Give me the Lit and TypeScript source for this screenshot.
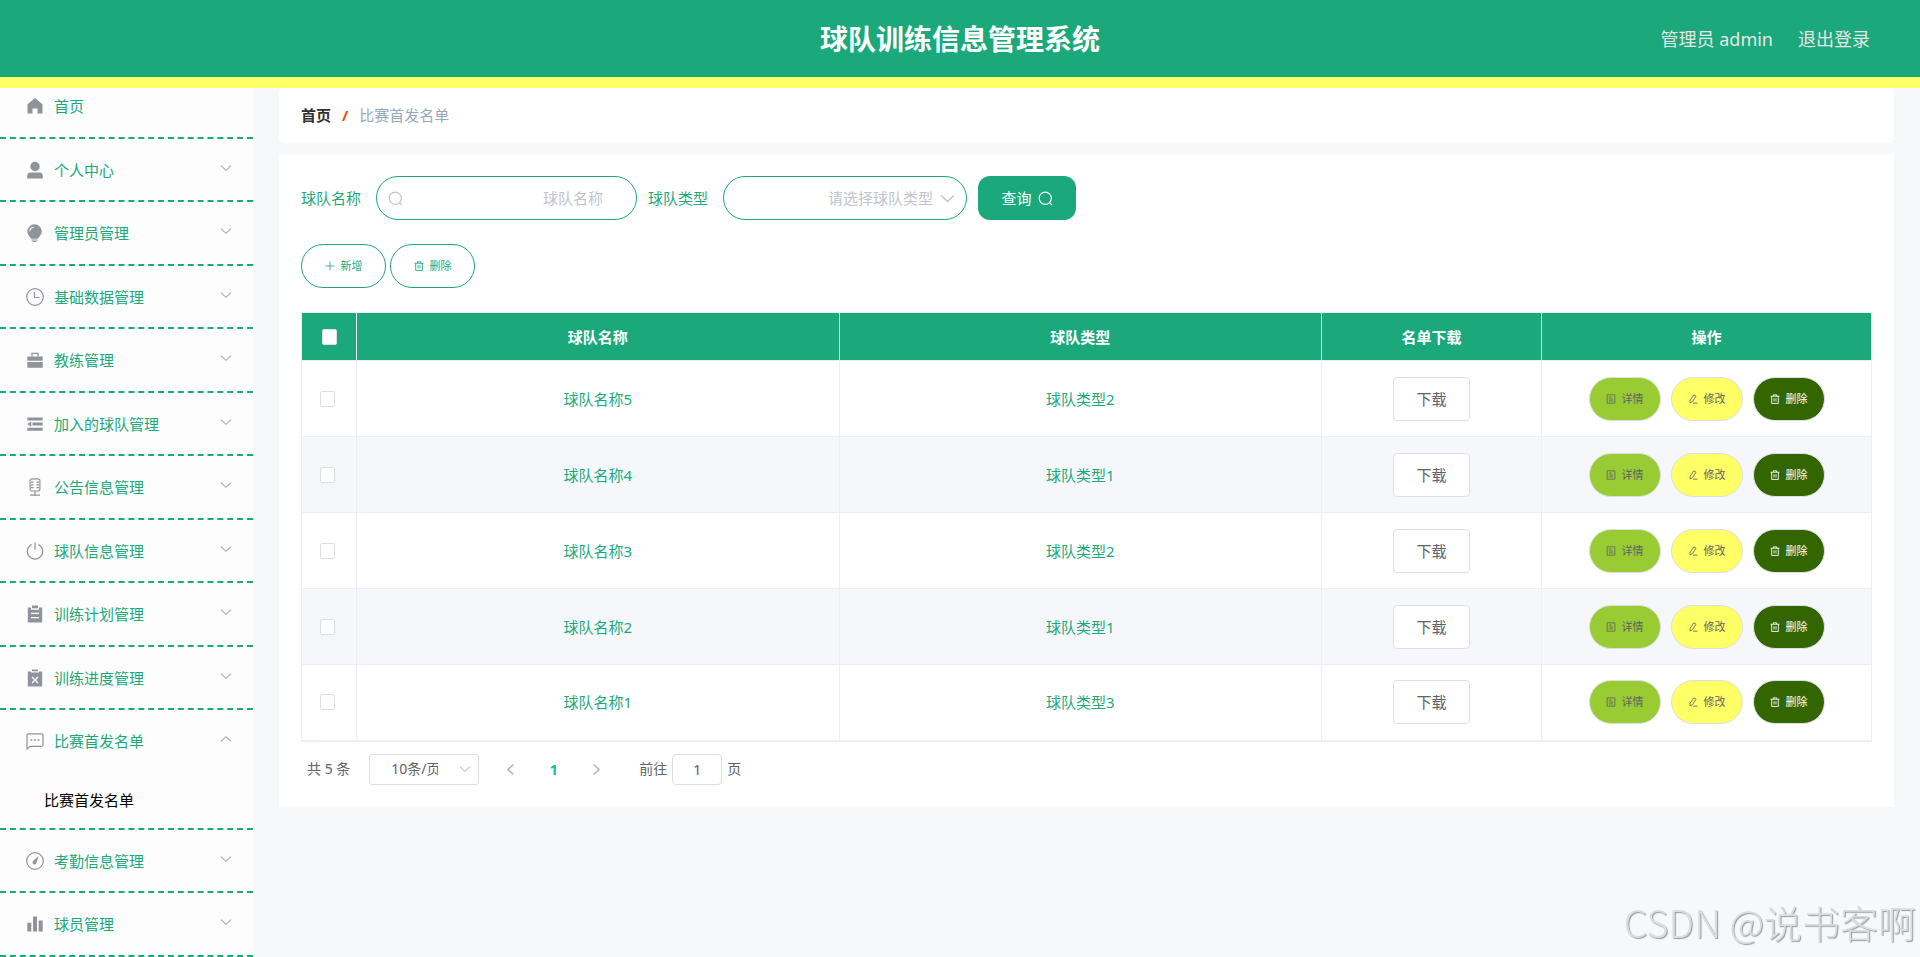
import { LitElement, html, css, svg, nothing } from "lit";
import { customElement, state } from "lit/decorators.js";

const icons: Record<string, unknown> = {
  home: svg`<path d="M9 1 1.500 7.300V16.500H6.500v-5h5v5h5V7.300Z" fill="currentColor"/>`,
  user: svg`<circle cx="9" cy="5.500" r="4.700" fill="currentColor"/><path d="M1.200 17.500v-2.300q0-3.400 3.400-3.700h8.800q3.400.3 3.400 3.700v2.300Z" fill="currentColor"/>`,
  bulb: svg`<path d="M8.500.3a7.200 7.200 0 0 0-7.200 7.200c0 3 1.900 4.600 4 7.300h6.400c2.100-2.700 4-4.300 4-7.300A7.200 7.200 0 0 0 8.500.3Z" fill="currentColor"/><path d="M3.700 7.200a4.600 4.600 0 0 1 4-4" fill="none" stroke="#fff" stroke-width="1.100"/><path d="M5.500 16h6M6.500 17.500h4" stroke="currentColor" stroke-width="1"/>`,
  clock: svg`<g fill="none" stroke="currentColor" stroke-width="1.200"><circle cx="9" cy="9" r="8.300"/><path d="M8.500 4v5.500h5"/></g>`,
  briefcase: svg`<path d="M1.300 5.500h15.400v4.200H1.300ZM1.300 11h15.400v5.800H1.300Z" fill="currentColor"/><path d="M6 5.500V2.300h6v3.200" fill="none" stroke="currentColor" stroke-width="1.300"/>`,
  fold: svg`<path d="M1.300 2.500h15.400v3H1.300ZM6.500 7.600h10.200v3H6.500ZM1.300 12.700h15.400v3H1.300ZM1.300 9.100l4-2.700v5.400Z" fill="currentColor"/>`,
  mic: svg`<g fill="none" stroke="currentColor" stroke-width="1.200"><rect x="4.100" y=".8" width="9.800" height="12.200" rx="2"/><path d="M5 4.200h2.500M10.500 4.200H13M5 6.900h2.500M10.500 6.900H13M5 9.600h2.500M10.500 9.600H13M9 13v4M4 17.200h10"/></g>`,
  power: svg`<g fill="none" stroke="currentColor" stroke-width="1.200"><path d="M5.700 2.500a7.700 7.700 0 1 0 6.600 0M9 .5v7.200"/></g>`,
  order: svg`<path d="M1.800 2.400H5v2.400h8V2.400h3.200v15.200H1.800ZM6 .6h6v2.600H6Z" fill="currentColor"/><path d="M5 8.300h8M5 12.700h8" stroke="#fff" stroke-width="1.200"/>`,
  release: svg`<path d="M1.800 2.400H5v1h8v-1h3.200v15.200H1.800ZM6 .6h6v1.600H6Z" fill="currentColor"/><path d="m6 8 6 6M12 8l-6 6" stroke="#fff" stroke-width="1.300"/>`,
  chat: svg`<path d="M1 17V3.600Q1 1.800 2.800 1.800h12.400q1.800 0 1.800 1.800v9q0 1.800-1.800 1.800H4.300Z" fill="none" stroke="currentColor" stroke-width="1.200"/><path d="M4.500 7.200h1.800v1.600H4.500ZM8.100 7.200h1.800v1.600H8.100ZM11.700 7.200h1.800v1.600h-1.800Z" fill="currentColor"/>`,
  odometer: svg`<circle cx="9" cy="9" r="8.300" fill="none" stroke="currentColor" stroke-width="1.200"/><path d="M12.600 4 6.800 9.300a2 2 0 1 0 3.600 1.700Z" fill="currentColor"/>`,
  bars: svg`<path d="M1.300 7.700h4v8.800h-4ZM7 1.500h4v15H7ZM12.700 5.500h4v11h-4Z" fill="currentColor"/>`,
  search: svg`<g fill="none" stroke="currentColor" stroke-width="1.400"><circle cx="8.700" cy="8.700" r="7.300"/><path d="m13.800 14 3.200 3"/></g>`,
  down: svg`<path d="m1.500 5.500 7.500 7 7.500-7" fill="none" stroke="currentColor" stroke-width="1.700"/>`,
  up: svg`<path d="m1.500 12.500 7.500-7 7.500 7" fill="none" stroke="currentColor" stroke-width="1.700"/>`,
  prev: svg`<path d="M12.500 3 6 9l6.500 6" fill="none" stroke="currentColor" stroke-width="2"/>`,
  next: svg`<path d="m5.500 3 6.500 6-6.500 6" fill="none" stroke="currentColor" stroke-width="2"/>`,
  plus: svg`<path d="M9 1v16M1 9h16" stroke="currentColor" stroke-width="1.500"/>`,
  trash: svg`<g fill="none" stroke="currentColor" stroke-width="1.600"><path d="M1 4h16M6 4V1.500h6V4M3 4v13h12V4M7.200 7.500v6M10.800 7.500v6"/></g>`,
  doc: svg`<g fill="none" stroke="currentColor" stroke-width="1.500"><path d="M2 1.500h14v15H2ZM5 5.500h5M5 9h8M5 12.500h8"/></g>`,
  edit: svg`<g fill="none" stroke="currentColor" stroke-width="1.500"><path d="M10.500 1.500 14.500 4 8 14l-4.500 2 .3-4.800ZM9 16.500h8"/></g>`,
};

const icon = (name: string, size: string) =>
  html`<svg class="icon ${size}" viewBox="0 0 18 18" aria-hidden="true">${icons[name]}</svg>`;

const menu = [
  { label: "首页", icon: "home", leaf: true },
  { label: "个人中心", icon: "user" },
  { label: "管理员管理", icon: "bulb" },
  { label: "基础数据管理", icon: "clock" },
  { label: "教练管理", icon: "briefcase" },
  { label: "加入的球队管理", icon: "fold" },
  { label: "公告信息管理", icon: "mic" },
  { label: "球队信息管理", icon: "power" },
  { label: "训练计划管理", icon: "order" },
  { label: "训练进度管理", icon: "release" },
  { label: "比赛首发名单", icon: "chat", children: ["比赛首发名单"] },
  { label: "考勤信息管理", icon: "odometer" },
  { label: "球员管理", icon: "bars" },
] as { label: string; icon: string; leaf?: boolean; children?: string[] }[];

const rows = [
  { name: "球队名称5", type: "球队类型2" },
  { name: "球队名称4", type: "球队类型1" },
  { name: "球队名称3", type: "球队类型2" },
  { name: "球队名称2", type: "球队类型1" },
  { name: "球队名称1", type: "球队类型3" },
];

@customElement("app-root")
export class AppRoot extends LitElement {
  @state() private open = "比赛首发名单";

  static styles = css`
    :host {
      --green: #1ba97b;
      --line: #ebeef5;
      --border: #dcdfe6;
      display: block;
      min-height: 100vh;
      background: #f7f8fa;
      color: #606266;
      font: 15px/20px "Noto Sans", "Noto Sans CJK SC", sans-serif;
    }
    * { box-sizing: border-box; }
    button, input, select { font: inherit; color: inherit; margin: 0; }
    button { cursor: pointer; }
    a { color: inherit; text-decoration: none; }
    .icon { display: block; flex: none; }
    .s10 { width: 10px; height: 10px; }
    .s12 { width: 12px; height: 12px; }
    .s15 { width: 15px; height: 15px; }
    .s18 { width: 18px; height: 18px; }

    .top {
      position: relative;
      z-index: 1;
      display: grid;
      grid-template-columns: 1fr auto 1fr;
      align-items: center;
      height: 88px;
      padding: 0 50px;
      background: var(--green);
      border-bottom: 11px solid #ffff66;
    }
    .title { grid-column: 2; margin: 0; color: #fff; font-size: 28px; line-height: 40px; font-weight: 700; }
    .account {
      display: flex;
      justify-content: flex-end;
      gap: 25px;
      color: #e6e6e6;
      font-size: 18px;
      line-height: 28px;
    }

    .body { display: flex; align-items: flex-start; }
    .side { flex: none; width: 253px; margin-top: -13px; background: #fdfdfd; }
    .menu { list-style: none; margin: 0; padding: 0; color: var(--green); }
    .entry { border-bottom: 2px dashed var(--green); }
    .head {
      display: flex;
      align-items: center;
      gap: 10px;
      width: 100%;
      height: 62px;
      padding: 0 20px 0 26px;
      border: 0;
      background: none;
      text-align: left;
    }
    .entry:nth-child(even) .head { height: 61px; }
    .head .s18 { color: #909399; }
    .head .s12 { color: #a8abb2; margin: 0 1px 4px auto; }
    .sub { display: flex; align-items: center; height: 56px; padding-left: 44px; color: #000; }

    .main { flex: 1; min-width: 0; padding: 0 26px 26px; }
    .crumbs {
      display: flex;
      align-items: center;
      gap: 11px;
      height: 55px;
      padding: 0 22px 2px;
      background: #fff;
      border-radius: 5px;
      color: #97a8be;
    }
    .crumbs a { color: #303133; font-weight: 700; }
    .slash { color: #ff4411; font-weight: 700; }
    .card { margin-top: 11px; padding: 22px; background: #fff; }

    .filters { display: flex; align-items: center; gap: 11px; }
    .filters label { min-width: 62px; color: var(--green); }
    .field { position: relative; display: flex; align-items: center; color: #c0c4cc; }
    .field input, .field select {
      height: 44px;
      padding: 0 33px;
      border: 1px solid var(--green);
      border-radius: 22px;
      background: #fff;
      outline: none;
      text-align: right;
      text-align-last: right;
      appearance: none;
    }
    .field input { width: 261px; margin-left: 2px; }
    .field select { width: 244px; margin-left: 2px; }
    .field input::placeholder { color: #c0c4cc; }
    .field .icon { position: absolute; pointer-events: none; }
    .field .lead { left: 14px; }
    .field .trail { right: 12px; }
    .query {
      display: flex;
      align-items: center;
      justify-content: center;
      gap: 6px;
      width: 98px;
      height: 44px;
      border: 0;
      border-radius: 12px;
      background: var(--green);
      color: #fff;
    }
    .tools { display: flex; gap: 4px; margin: 24px 0; }
    .pill {
      display: inline-flex;
      align-items: center;
      justify-content: center;
      gap: 6px;
      height: 44px;
      width: 72px;
      padding: 0;
      border: 1px solid var(--border);
      border-radius: 22px;
      font-size: 11px;
      line-height: 16px;
    }
    .tools .pill { width: 85px; border-color: var(--green); background: #fff; color: var(--green); }
    .detail { background: #99cc33; }
    .edit { background: #ffff66; }
    .remove { background: #336600; color: #fff; }

    .grid { width: 100%; table-layout: fixed; border-collapse: collapse; text-align: center; border-bottom: 2px solid var(--line); }
    .grid th, .grid td { padding: 0; border: 1px solid var(--line); }
    .grid th { height: 48px; background: var(--green); color: #fff; font-size: 15px; }
    .grid td { height: 76px; }
    .grid tbody tr:nth-child(even) { background: #f5f7fb; }
    .c-check { width: 55px; }
    .c-file { width: 220px; }
    .c-ops { width: 330px; }
    .green { color: var(--green); }
    .tick {
      appearance: none;
      display: block;
      width: 15px;
      height: 16px;
      margin: 0 auto;
      border: 1px solid var(--border);
      border-radius: 2px;
      background: #fff;
    }
    .tick:checked { background: var(--green); }
    td .tick { margin-left: 18px; }
    .download {
      width: 77px;
      height: 44px;
      padding: 0;
      border: 1px solid var(--border);
      border-radius: 4px;
      background: #fff;
    }
    .ops { display: flex; justify-content: center; gap: 10px; }

    .pager { display: flex; align-items: center; margin-top: 12px; padding-left: 6px; font-size: 14px; height: 31px; }
    .size { position: relative; display: flex; align-items: center; margin: 0 10px 0 19px; color: #c0c4cc; }
    .size select {
      width: 110px;
      height: 31px;
      padding: 0 40px 0 21px;
      border: 1px solid var(--border);
      border-radius: 3px;
      background: #fff;
      color: #606266;
      appearance: none;
    }
    .size .icon { position: absolute; right: 8px; pointer-events: none; }
    .page {
      display: flex;
      align-items: center;
      justify-content: center;
      width: 43px;
      height: 31px;
      padding: 0;
      border: 0;
      background: none;
      color: #b4b8c0;
    }
    .current { color: #0fc595; font-size: 15px; font-weight: 700; }
    .jump { display: flex; align-items: center; gap: 5px; margin-left: 21px; }
    .jump input {
      width: 50px;
      height: 31px;
      padding: 0;
      border: 1px solid var(--border);
      border-radius: 4px;
      text-align: center;
      background: #fff;
    }
    .mark {
      position: fixed;
      right: 4px;
      bottom: 11px;
      color: #dcdddf;
      font: 300 38px/48px "Noto Sans CJK SC", sans-serif;
      text-shadow: 1px 1px 1px #999;
      pointer-events: none;
    }
  `;

  private entry(m: (typeof menu)[number]) {
    const open = !!m.children && this.open === m.label;
    return html`<li class="entry">
      <button class="head" @click=${() => (this.open = open ? "" : m.label)}>
        ${icon(m.icon, "s18")}<span>${m.label}</span>
        ${m.leaf ? nothing : icon(open ? "up" : "down", "s12")}
      </button>
      ${open ? m.children!.map((c) => html`<a class="sub" href="#">${c}</a>`) : nothing}
    </li>`;
  }

  render() {
    return html`
      <header class="top">
        <h1 class="title">球队训练信息管理系统</h1>
        <div class="account"><span>管理员 admin</span><a href="#">退出登录</a></div>
      </header>
      <div class="body">
        <nav class="side"><ul class="menu">${menu.map((m) => this.entry(m))}</ul></nav>
        <main class="main">
          <nav class="crumbs"><a href="#">首页</a><span class="slash">/</span><span>比赛首发名单</span></nav>
          <section class="card">
            <form class="filters" @submit=${(e: Event) => e.preventDefault()}>
              <label for="name">球队名称</label>
              <div class="field">
                <input id="name" type="text" placeholder="球队名称" />${icon("search", "s15 lead")}
              </div>
              <label for="type">球队类型</label>
              <div class="field">
                <select id="type"><option>请选择球队类型</option></select>${icon("down", "s15 trail")}
              </div>
              <button class="query">查询${icon("search", "s15")}</button>
            </form>
            <div class="tools">
              <button class="pill">${icon("plus", "s10")}新增</button>
              <button class="pill">${icon("trash", "s10")}删除</button>
            </div>
            <table class="grid">
              <colgroup><col class="c-check" /><col /><col /><col class="c-file" /><col class="c-ops" /></colgroup>
              <thead>
                <tr>
                  <th><input class="tick" type="checkbox" aria-label="全选" /></th>
                  <th>球队名称</th><th>球队类型</th><th>名单下载</th><th>操作</th>
                </tr>
              </thead>
              <tbody>
                ${rows.map((r) => html`<tr>
                  <td><input class="tick" type="checkbox" aria-label=${r.name} /></td>
                  <td class="green">${r.name}</td>
                  <td class="green">${r.type}</td>
                  <td><button class="download">下载</button></td>
                  <td><div class="ops">
                    <button class="pill detail">${icon("doc", "s10")}详情</button>
                    <button class="pill edit">${icon("edit", "s10")}修改</button>
                    <button class="pill remove">${icon("trash", "s10")}删除</button>
                  </div></td>
                </tr>`)}
              </tbody>
            </table>
            <div class="pager">
              <span>共 5 条</span>
              <div class="size">
                <select aria-label="每页条数"><option>10条/页</option></select>${icon("down", "s12")}
              </div>
              <button class="page" aria-label="上一页">${icon("prev", "s15")}</button>
              <button class="page current">1</button>
              <button class="page" aria-label="下一页">${icon("next", "s15")}</button>
              <div class="jump">
                <label for="goto">前往</label><input id="goto" type="text" value="1" /><span>页</span>
              </div>
            </div>
          </section>
        </main>
      </div>
      <div class="mark">CSDN @说书客啊</div>
    `;
  }
}
